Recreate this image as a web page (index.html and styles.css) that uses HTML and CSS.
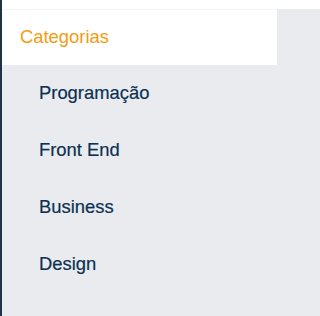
FILE: index.html
```html
<!DOCTYPE html>
<html lang="pt">
<head>
<meta charset="utf-8">
<link rel="stylesheet" href="styles.css">
</head>
<body>
<div class="page">
  <div class="topbar"></div>
  <nav class="sidebar">
    <div class="header">Categorias</div>
    <ul class="list">
      <li class="item">Programação</li>
      <li class="item">Front End</li>
      <li class="item">Business</li>
      <li class="item">Design</li>
    </ul>
  </nav>
</div>
</body>
</html>
```
FILE: styles.css
```css
html, body {
  margin: 0;
  padding: 0;
  height: 100%;
  background: #ffffff;
}
.page {
  height: 100%;
  border-left: 2px solid #1b3248;
  display: flex;
  flex-direction: column;
  font-family: "Liberation Sans", Arial, sans-serif;
}
.topbar {
  height: 9px;
  background: #ffffff;
  flex: none;
}
.sidebar {
  flex: 1;
  background: #e9ebee;
}
.header {
  width: 275px;
  height: 56px;
  box-sizing: border-box;
  padding-left: 18px;
  padding-bottom: 2px;
  background: #ffffff;
  border-top: 1px solid #f3f4f6;
  display: flex;
  align-items: center;
  color: #f39c12;
  font-size: 18.4px;
}
.list {
  list-style: none;
  margin: 0;
  padding: 0;
}
.item {
  height: 57px;
  box-sizing: border-box;
  padding-bottom: 2px;
  display: flex;
  align-items: center;
  padding-left: 37px;
  color: #0d3152;
  font-size: 18.4px;
  -webkit-text-stroke: 0.2px #0d3152;
}
```
